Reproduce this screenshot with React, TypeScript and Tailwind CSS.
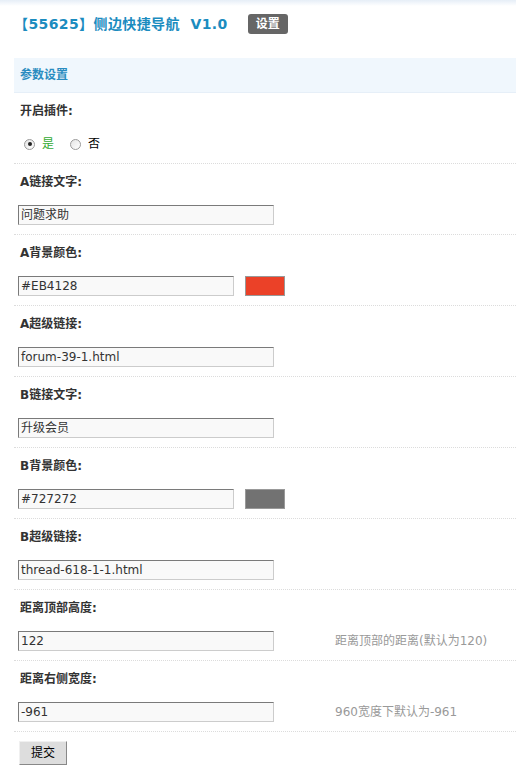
const font = { fontFamily: '"DejaVu Sans", Verdana, "Noto Sans CJK SC", sans-serif' };

type Field = {
  label: string;
  value: string;
  color?: string;
  hint?: string;
};

const fields: Field[] = [
  { label: "A链接文字:", value: "问题求助" },
  { label: "A背景颜色:", value: "#EB4128", color: "#EB4128" },
  { label: "A超级链接:", value: "forum-39-1.html" },
  { label: "B链接文字:", value: "升级会员" },
  { label: "B背景颜色:", value: "#727272", color: "#727272" },
  { label: "B超级链接:", value: "thread-618-1-1.html" },
  { label: "距离顶部高度:", value: "122", hint: "距离顶部的距离(默认为120)" },
  { label: "距离右侧宽度:", value: "-961", hint: "960宽度下默认为-961" },
];

function Radio({ checked }: { checked: boolean }) {
  return (
    <span className="w-[11px] h-[11px] rounded-full border border-[#9a9a9a] bg-gradient-to-br from-[#e4e4e4] to-white flex items-center justify-center">
      {checked && <span className="w-[4px] h-[4px] rounded-full bg-[#222]" />}
    </span>
  );
}

function Row({ label, children }: { label: string; children: React.ReactNode }) {
  return (
    <div className="pl-[4px] pt-[9px] pb-[9px] border-b border-dotted border-[#dcdcdc]">
      <div className="ml-[2px] h-[18px] leading-[18px] text-[12px] font-bold text-[#333]">{label}</div>
      <div className="mt-[14px] h-[20px] flex items-center">{children}</div>
    </div>
  );
}

export default function App() {
  return (
    <div className="min-h-screen bg-white text-[12px] text-[#333]" style={font}>
      <div className="h-[6px] bg-gradient-to-b from-[#e6eef7] to-white" />
      <div className="pl-[14px] pt-[8px] h-[20px] box-content flex items-center">
        <span className="text-[14px] font-bold text-[#1b8cbf] tracking-[0.4px]">【55625】侧边快捷导航&nbsp;&nbsp;V1.0</span>
        <span className="ml-[20px] w-[40px] h-[20px] rounded-[3px] bg-[#666] text-white font-bold text-[12px] flex items-center justify-center">
          设置
        </span>
      </div>
      <div className="ml-[14px] mt-[24px] h-[35px] bg-[#f0f7fd] border-b border-[#e6eff8] flex items-center pl-[6px] font-bold text-[12px] text-[#2a8cc0]">
        参数设置
      </div>
      <div className="ml-[14px]">
        <Row label="开启插件:">
          <div className="ml-[6px] flex items-center">
            <Radio checked />
            <span className="ml-[7px] text-[#33aa33]">是</span>
            <span className="ml-[16px]">
              <Radio checked={false} />
            </span>
            <span className="ml-[7px] text-black">否</span>
          </div>
        </Row>
        {fields.map((f) => (
          <Row key={f.label} label={f.label}>
            <div
              className={`${f.color ? "w-[216px]" : "w-[256px]"} h-[20px] bg-[#f9f9f9] border border-t-[#7a7a7a] border-l-[#7a7a7a] border-r-[#cccccc] border-b-[#cccccc] pl-[2px] flex items-center text-[12px] text-[#333]`}
            >
              {f.value}
            </div>
            {f.color && (
              <div className="ml-[11px] w-[40px] h-[20px] border border-[#999]" style={{ backgroundColor: f.color }} />
            )}
            {f.hint && <span className="ml-[61px] text-[#999]">{f.hint}</span>}
          </Row>
        ))}
        <button
          type="button"
          className="mt-[9px] ml-[5px] w-[48px] h-[24px] bg-[#dddddd] border border-t-[#f0f0f0] border-l-[#f0f0f0] border-r-[#888] border-b-[#888] text-[12px] text-black flex items-center justify-center"
        >
          提交
        </button>
      </div>
    </div>
  );
}
